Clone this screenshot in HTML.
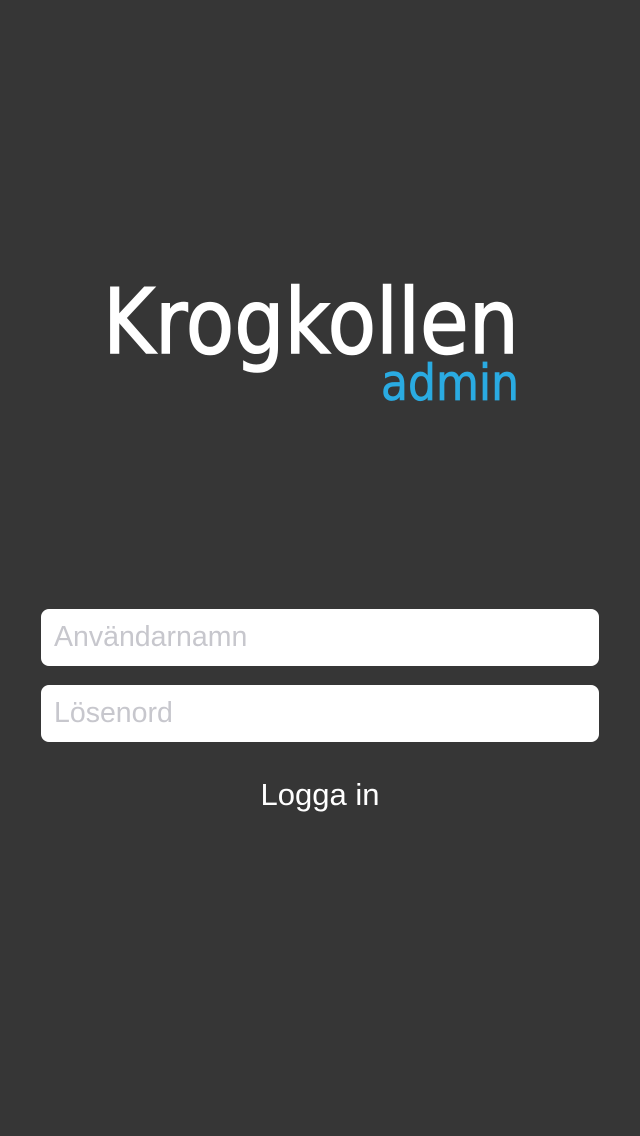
<!DOCTYPE html>
<html><head><meta charset="utf-8"><style>
html,body{margin:0;padding:0;}
body{width:640px;height:1136px;background:#363636;position:relative;overflow:hidden;font-family:"Liberation Sans",Arial,sans-serif;}
.in{position:absolute;left:41px;width:558px;height:57px;background:#fff;border-radius:8px;}
.ph{position:absolute;left:13px;top:12px;font-size:28.5px;color:#c7c7cd;line-height:32px;}
.btn{position:absolute;left:0;width:640px;top:777px;text-align:center;color:#fff;font-size:31px;line-height:36px;}
svg{position:absolute;left:0;top:0;}
</style></head><body>
<svg width="640" height="450" viewBox="0 0 640 450">
<text x="103" y="353" textLength="416" lengthAdjust="spacingAndGlyphs" font-family="DejaVu Sans, sans-serif" font-size="90" fill="#fff" stroke="#fff" stroke-width="1.5">Krogkollen</text>
<text x="381" y="400" textLength="138" lengthAdjust="spacingAndGlyphs" font-family="DejaVu Sans, sans-serif" font-size="50" fill="#2aabe2" stroke="#2aabe2" stroke-width="0.8">admin</text>
</svg>
<div class="in" style="top:609px"><div class="ph">Användarnamn</div></div>
<div class="in" style="top:685px"><div class="ph">Lösenord</div></div>
<div class="btn">Logga in</div>
</body></html>
